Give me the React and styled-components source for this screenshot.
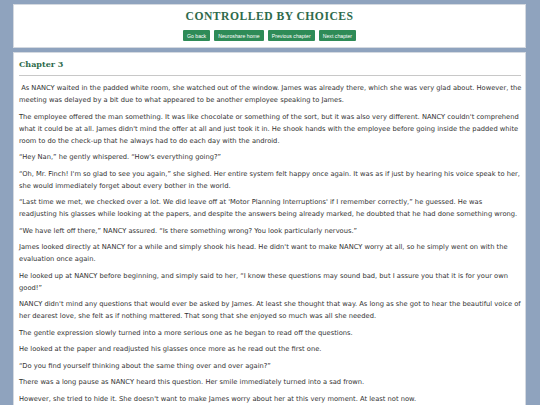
import React from "react";
import styled, { createGlobalStyle } from "styled-components";

const Global = createGlobalStyle`
  html, body {
    margin: 0;
    padding: 0;
    background: #8fa3be;
  }
  body {
    font-family: "DejaVu Sans", Verdana, sans-serif;
  }
`;

const Page = styled.div`
  width: 513px;
  margin: 0 auto 0 13px;
  padding-top: 4px;
  display: flex;
  flex-direction: column;
  gap: 4px;
`;

const Panel = styled.div`
  background: #ffffff;
  border: 1px solid #d4d9e0;
  box-sizing: border-box;
`;

const Header = styled(Panel)`
  height: 44px;
  display: flex;
  flex-direction: column;
  align-items: center;
  padding-top: 5px;
  box-sizing: border-box;
`;

const Title = styled.h1`
  margin: 0;
  font-family: "Liberation Serif", "DejaVu Serif", serif;
  font-weight: bold;
  font-size: 11.6px;
  letter-spacing: 0.5px;
  color: #2d6a4b;
  line-height: 14px;
`;

const Nav = styled.div`
  display: flex;
  gap: 4px;
  margin-top: 6px;
`;

const NavButton = styled.button`
  background: #2e8b57;
  color: #ffffff;
  border: none;
  border-radius: 1px;
  font-family: "Liberation Sans", Arial, sans-serif;
  font-size: 5.2px;
  height: 11px;
  padding: 0 4px;
  cursor: pointer;
`;

const Content = styled(Panel)`
  padding: 4px 3px 10px 5px;
  min-height: 360px;
`;

const ChapterTitle = styled.h2`
  margin: 0;
  font-family: "DejaVu Serif", "Liberation Serif", serif;
  font-weight: bold;
  font-size: 8px;
  line-height: 12px;
  color: #2d6a4b;
  padding-top: 1px;
`;

const Rule = styled.hr`
  border: none;
  border-top: 1px solid #c8c8c8;
  margin: 5px 1px 6px 0;
`;

const Para = styled.p`
  margin: 0 0 4.5px;
  font-size: 6.72px;
  line-height: 12px;
  color: #333333;
`;

const paragraphs = [
  "\u00a0As NANCY waited in the padded white room, she watched out of the window. James was already there, which she was very glad about. However, the meeting was delayed by a bit due to what appeared to be another employee speaking to James.",
  "The employee offered the man something. It was like chocolate or something of the sort, but it was also very different. NANCY couldn't comprehend what it could be at all. James didn't mind the offer at all and just took it in. He shook hands with the employee before going inside the padded white room to do the check-up that he always had to do each day with the android.",
  "\u201cHey Nan,\u201d he gently whispered. \u201cHow's everything going?\u201d",
  "\u201cOh, Mr. Finch! I'm so glad to see you again,\u201d she sighed. Her entire system felt happy once again. It was as if just by hearing his voice speak to her, she would immediately forget about every bother in the world.",
  "\u201cLast time we met, we checked over a lot. We did leave off at 'Motor Planning Interruptions' if I remember correctly,\u201d he guessed. He was readjusting his glasses while looking at the papers, and despite the answers being already marked, he doubted that he had done something wrong.",
  "\u201cWe have left off there,\u201d NANCY assured. \u201cIs there something wrong? You look particularly nervous.\u201d",
  "James looked directly at NANCY for a while and simply shook his head. He didn't want to make NANCY worry at all, so he simply went on with the evaluation once again.",
  "He looked up at NANCY before beginning, and simply said to her, \u201cI know these questions may sound bad, but I assure you that it is for your own good!\u201d",
  "NANCY didn't mind any questions that would ever be asked by James. At least she thought that way. As long as she got to hear the beautiful voice of her dearest love, she felt as if nothing mattered. That song that she enjoyed so much was all she needed.",
  "The gentle expression slowly turned into a more serious one as he began to read off the questions.",
  "He looked at the paper and readjusted his glasses once more as he read out the first one.",
  "\u201cDo you find yourself thinking about the same thing over and over again?\u201d",
  "There was a long pause as NANCY heard this question. Her smile immediately turned into a sad frown.",
  "However, she tried to hide it. She doesn't want to make James worry about her at this very moment. At least not now.",
];

const navItems = ["Go back", "Neuroshare home", "Previous chapter", "Next chapter"];

export default function App() {
  return (
    <>
      <Global />
      <Page>
        <Header>
          <Title>CONTROLLED BY CHOICES</Title>
          <Nav>
            {navItems.map((label) => (
              <NavButton key={label}>{label}</NavButton>
            ))}
          </Nav>
        </Header>
        <Content>
          <ChapterTitle>Chapter 3</ChapterTitle>
          <Rule />
          {paragraphs.map((text, i) => (
            <Para key={i}>{text}</Para>
          ))}
        </Content>
      </Page>
    </>
  );
}
